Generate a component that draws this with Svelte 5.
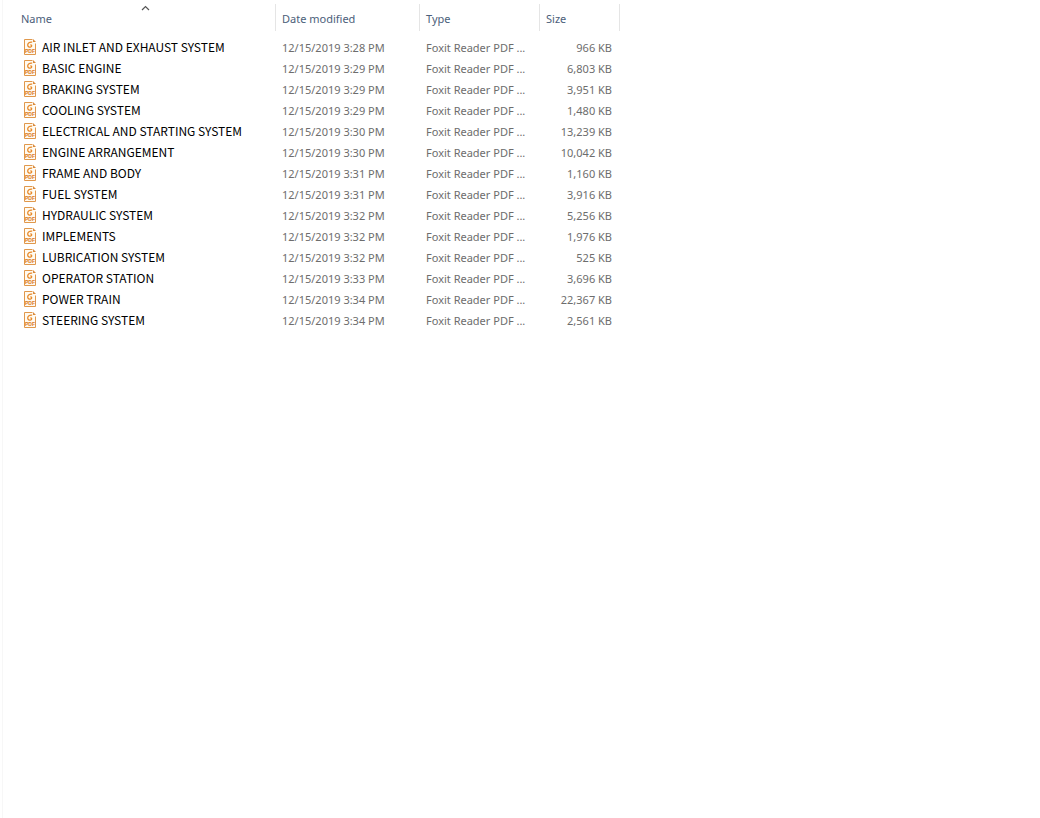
<script lang="ts">
  type PdfFile = { name: string; modified: string; size: string };

  let ascending = $state(true);

  const files: PdfFile[] = [
    { name: 'AIR INLET AND EXHAUST SYSTEM', modified: '12/15/2019 3:28 PM', size: '966 KB' },
    { name: 'BASIC ENGINE', modified: '12/15/2019 3:29 PM', size: '6,803 KB' },
    { name: 'BRAKING SYSTEM', modified: '12/15/2019 3:29 PM', size: '3,951 KB' },
    { name: 'COOLING SYSTEM', modified: '12/15/2019 3:29 PM', size: '1,480 KB' },
    { name: 'ELECTRICAL AND STARTING SYSTEM', modified: '12/15/2019 3:30 PM', size: '13,239 KB' },
    { name: 'ENGINE ARRANGEMENT', modified: '12/15/2019 3:30 PM', size: '10,042 KB' },
    { name: 'FRAME AND BODY', modified: '12/15/2019 3:31 PM', size: '1,160 KB' },
    { name: 'FUEL SYSTEM', modified: '12/15/2019 3:31 PM', size: '3,916 KB' },
    { name: 'HYDRAULIC SYSTEM', modified: '12/15/2019 3:32 PM', size: '5,256 KB' },
    { name: 'IMPLEMENTS', modified: '12/15/2019 3:32 PM', size: '1,976 KB' },
    { name: 'LUBRICATION SYSTEM', modified: '12/15/2019 3:32 PM', size: '525 KB' },
    { name: 'OPERATOR STATION', modified: '12/15/2019 3:33 PM', size: '3,696 KB' },
    { name: 'POWER TRAIN', modified: '12/15/2019 3:34 PM', size: '22,367 KB' },
    { name: 'STEERING SYSTEM', modified: '12/15/2019 3:34 PM', size: '2,561 KB' }
  ];

  let sorted = $derived(ascending ? files : [...files].reverse());
</script>

<main class="file-list">
  <table>
    <colgroup>
      <col class="col-name" />
      <col class="col-date" />
      <col class="col-type" />
      <col class="col-size" />
    </colgroup>
    <thead>
      <tr>
        <th class="name" aria-sort={ascending ? 'ascending' : 'descending'}>
          <button type="button" onclick={() => (ascending = !ascending)}>Name</button>
          <svg class="arrow" class:down={!ascending} viewBox="0 0 9 6" aria-hidden="true">
            <path d="M1 5 4.500 1.500 8 5" fill="none" stroke="#555" stroke-width="1.200" />
          </svg>
        </th>
        <th><button type="button">Date modified</button></th>
        <th><button type="button">Type</button></th>
        <th><button type="button">Size</button></th>
      </tr>
    </thead>
    <tbody>
      {#each sorted as file (file.name)}
        <tr>
          <td class="name">
            <div class="file">
              <svg class="icon" viewBox="0 0 12 16" aria-hidden="true">
                <path d="M8.500.500H.5V15.500H11.500V4.500" fill="#fffaf0" stroke="#e0984c" />
                <path d="M9 0 12 3H9Z" fill="#d98a3c" />
                <path
                  d="M8.200 3.200C5.500 2.700 3.700 4.200 3.700 6S5.500 8.600 6.800 8 8 5.800 6.300 5.800"
                  fill="none"
                  stroke="#e88a2a"
                  stroke-width="1.300"
                />
                <text x="6" y="14" text-anchor="middle">PDF</text>
              </svg>
              <span>{file.name}</span>
            </div>
          </td>
          <td>{file.modified}</td>
          <td>Foxit Reader PDF ...</td>
          <td class="size">{file.size}</td>
        </tr>
      {/each}
    </tbody>
  </table>
</main>

<style>
  :global(body) {
    margin: 0;
    background: #fff;
  }

  .file-list {
    box-sizing: border-box;
    min-height: 100vh;
    margin-left: 2px;
    padding-top: 4px;
    border-left: 1px solid #f7f7f7;
    font-family: 'Noto Sans', 'Open Sans', sans-serif;
    font-size: 11px;
    line-height: 20px;
    color: #6d6d6d;
  }

  table {
    table-layout: fixed;
    width: 617px;
    border-collapse: separate;
    border-spacing: 0;
  }

  .col-name {
    width: 273px;
  }

  .col-date {
    width: 144px;
  }

  .col-type {
    width: 120px;
  }

  .col-size {
    width: 80px;
  }

  th {
    position: relative;
    height: 27px;
    padding: 2px 0 0 6px;
    border-right: 1px solid #e5e5e5;
    box-sizing: border-box;
    text-align: left;
    font-weight: 400;
  }

  th button {
    display: block;
    width: 100%;
    padding: 0;
    border: none;
    background: none;
    font: inherit;
    text-align: left;
    color: #4c607a;
  }

  .arrow {
    position: absolute;
    top: 1px;
    left: 138px;
    width: 9px;
    height: 6px;
  }

  .arrow.down {
    transform: rotate(180deg);
  }

  tbody::before {
    content: '';
    display: block;
    height: 6px;
  }

  td {
    height: 21px;
    padding: 0 0 0 6px;
    white-space: nowrap;
  }

  th.name {
    padding-left: 18px;
  }

  td.name {
    padding-left: 21px;
    font-family: 'Noto Sans CJK SC', 'Noto Sans', sans-serif;
    font-size: 12px;
    line-height: 18px;
    color: #000;
  }

  td.size {
    padding-right: 8px;
    text-align: right;
  }

  .file {
    display: flex;
    align-items: center;
    gap: 6px;
    padding-bottom: 2px;
  }

  .icon {
    width: 12px;
    height: 16px;
    flex: none;
  }

  .icon text {
    font-family: 'Liberation Sans', sans-serif;
    font-size: 5px;
    font-weight: 700;
    fill: #d9781c;
  }
</style>
